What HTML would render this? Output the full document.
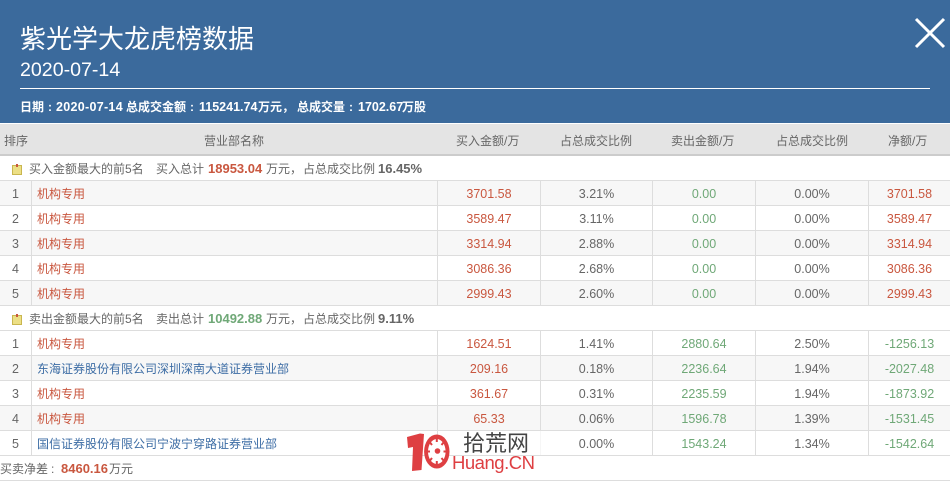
<!DOCTYPE html>
<html><head><meta charset="utf-8">
<style>
html,body{margin:0;padding:0;background:#fff}
body{width:950px;height:482px;position:relative;overflow:hidden;font-family:"Liberation Sans","Noto Sans CJK SC",sans-serif;font-size:12px;color:#666}
.a{position:absolute;white-space:nowrap}
.r{position:absolute;left:0;width:950px;height:24px;border-bottom:1px solid #ddd;display:flex;line-height:26px;font-size:12.5px;box-sizing:content-box}
.r.s{background:#f7f7f7}
.r>span{display:block;box-sizing:border-box;height:24px;text-align:center;border-right:1px solid #ddd;flex:none}
.r>span:nth-child(1){width:32px;text-align:left;padding-left:12px}
.r>span:nth-child(2){width:406px;text-align:left;padding-left:5px;font-size:12px;line-height:26px}
.r>span:nth-child(3){width:103px}
.r>span:nth-child(4){width:112px}
.r>span:nth-child(5){width:103px}
.r>span:nth-child(6){width:113px}
.r>span:nth-child(7){width:81px;border-right:0}
.u{color:#c9573f}.d{color:#6fa877}.b{color:#3d6da5}
.g{position:absolute;left:0;width:950px;height:24px;border-bottom:1px solid #ddd;line-height:26px}
.g b{font-size:13px}
.g svg{position:absolute;left:12px;top:8px}
.g .t{position:absolute;top:0;white-space:nowrap}
.h{position:absolute;top:132px;line-height:18px;white-space:nowrap;color:#666}
.i{position:absolute;top:98px;font-size:12px;line-height:18px;color:#fff;font-weight:bold;white-space:nowrap}
</style></head><body>
<div class="a" style="left:0;top:0;width:950px;height:123px;background:#3b6a9c"></div>
<div class="a" style="left:20px;top:21px;font-size:26px;line-height:36px;color:#fff">紫光学大龙虎榜数据</div>
<div class="a" style="left:20px;top:58px;font-size:19.6px;line-height:24px;color:#fff">2020-07-14</div>
<div class="a" style="left:20px;top:88px;width:910px;height:1px;background:#fff"></div>
<span class="i" style="left:20px">日期</span><span class="i" style="left:48px">:</span>
<span class="i" style="left:56px;font-size:12.5px;letter-spacing:.3px">2020-07-14</span>
<span class="i" style="left:126px">总成交金额</span><span class="i" style="left:190px">:</span>
<span class="i" style="left:199px;font-size:12.5px">115241.74</span><span class="i" style="left:258px">万元，</span>
<span class="i" style="left:297px">总成交量</span><span class="i" style="left:349px">:</span>
<span class="i" style="left:358px;font-size:12.5px">1702.67</span><span class="i" style="left:402px">万股</span>
<svg class="a" style="left:912px;top:15px" width="36" height="36" viewBox="0 0 36 36"><path d="M4 4L32 32M32 4L4 32" stroke="#fff" stroke-width="3" fill="none"/></svg>

<div class="a" style="left:0;top:124px;width:950px;background:#e4e4e4;border-bottom:2px solid #ccc;box-sizing:content-box;height:30px"></div>
<div class="h" style="left:4px">排序</div>
<div class="h" style="left:204px">营业部名称</div>
<div class="h" style="left:456px">买入金额/万</div>
<div class="h" style="left:560px">占总成交比例</div>
<div class="h" style="left:671px">卖出金额/万</div>
<div class="h" style="left:776px">占总成交比例</div>
<div class="h" style="left:888px">净额/万</div>

<div class="g" style="top:156px"><svg width="11" height="12" viewBox="0 0 11 12"><rect x=".5" y="1.5" width="9" height="9" fill="#ecdf85" stroke="#c9b64f"/><rect x="4" y="0" width="2" height="3" fill="#c9573f"/></svg><span class="t" style="left:29px">买入金额最大的前5名</span><span class="t" style="left:156px">买入总计</span><b class="t u" style="left:208px">18953.04</b><span class="t" style="left:266px">万元，</span><span class="t" style="left:303px">占总成交比例</span><b class="t" style="left:378px">16.45%</b></div>

<div class="r s" style="top:181px"><span>1</span><span class="u">机构专用</span><span class="u">3701.58</span><span>3.21%</span><span class="d">0.00</span><span>0.00%</span><span class="u">3701.58</span></div>
<div class="r" style="top:206px"><span>2</span><span class="u">机构专用</span><span class="u">3589.47</span><span>3.11%</span><span class="d">0.00</span><span>0.00%</span><span class="u">3589.47</span></div>
<div class="r s" style="top:231px"><span>3</span><span class="u">机构专用</span><span class="u">3314.94</span><span>2.88%</span><span class="d">0.00</span><span>0.00%</span><span class="u">3314.94</span></div>
<div class="r" style="top:256px"><span>4</span><span class="u">机构专用</span><span class="u">3086.36</span><span>2.68%</span><span class="d">0.00</span><span>0.00%</span><span class="u">3086.36</span></div>
<div class="r s" style="top:281px"><span>5</span><span class="u">机构专用</span><span class="u">2999.43</span><span>2.60%</span><span class="d">0.00</span><span>0.00%</span><span class="u">2999.43</span></div>

<div class="g" style="top:306px"><svg width="11" height="12" viewBox="0 0 11 12"><rect x=".5" y="1.5" width="9" height="9" fill="#ecdf85" stroke="#c9b64f"/><rect x="4" y="0" width="2" height="3" fill="#c9573f"/></svg><span class="t" style="left:29px">卖出金额最大的前5名</span><span class="t" style="left:156px">卖出总计</span><b class="t d" style="left:208px">10492.88</b><span class="t" style="left:266px">万元，</span><span class="t" style="left:303px">占总成交比例</span><b class="t" style="left:378px">9.11%</b></div>

<div class="r" style="top:331px"><span>1</span><span class="u">机构专用</span><span class="u">1624.51</span><span>1.41%</span><span class="d">2880.64</span><span>2.50%</span><span class="d">-1256.13</span></div>
<div class="r s" style="top:356px"><span>2</span><span class="b">东海证券股份有限公司深圳深南大道证券营业部</span><span class="u">209.16</span><span>0.18%</span><span class="d">2236.64</span><span>1.94%</span><span class="d">-2027.48</span></div>
<div class="r" style="top:381px"><span>3</span><span class="u">机构专用</span><span class="u">361.67</span><span>0.31%</span><span class="d">2235.59</span><span>1.94%</span><span class="d">-1873.92</span></div>
<div class="r s" style="top:406px"><span>4</span><span class="u">机构专用</span><span class="u">65.33</span><span>0.06%</span><span class="d">1596.78</span><span>1.39%</span><span class="d">-1531.45</span></div>
<div class="r" style="top:431px"><span>5</span><span class="b">国信证券股份有限公司宁波宁穿路证券营业部</span><span class="u" style="opacity:.25">0.00</span><span>0.00%</span><span class="d">1543.24</span><span>1.34%</span><span class="d">-1542.64</span></div>

<div class="a" style="left:0;top:456px;width:950px;height:24px;border-bottom:1px solid #ddd;line-height:26px"><span class="a" style="left:0">买卖净差</span><span class="a" style="left:51px">:</span><b class="a u" style="left:61px;font-size:13px">8460.16</b><span class="a" style="left:109px">万元</span></div>

<svg class="a" style="left:400px;top:425px" width="145" height="50" viewBox="0 0 145 50">
<rect x="62" y="6" width="70" height="24" fill="#fff" opacity=".85"/>
<path d="M7 12L20 8.500L24 9L21.500 45L12 46L13 22L8 23Z" fill="#de3f42"/>
<ellipse cx="36.800" cy="26.500" rx="12.700" ry="17" fill="#de3f42"/>
<ellipse cx="36.800" cy="26.500" rx="8.800" ry="12.500" fill="#fff"/>
<circle cx="37.500" cy="26" r="2.800" fill="#de3f42"/>
<path d="M36.800 13.500V17M36.800 36V39.500M27.500 26.500H30M43.500 26.500H46M30 17.500L32 20M41.500 33L43.500 35.500M43.500 17.500L41.500 20M32 33L30 35.500" stroke="#de3f42" stroke-width="2"/>
<text x="63" y="26" font-size="22" fill="#444" font-family="'Noto Sans CJK SC',sans-serif">拾荒网</text>
<text x="52" y="44" font-size="18.500" fill="#de3f42" font-family="'Liberation Sans',sans-serif" textLength="83">Huang.CN</text>
</svg>
</body></html>
